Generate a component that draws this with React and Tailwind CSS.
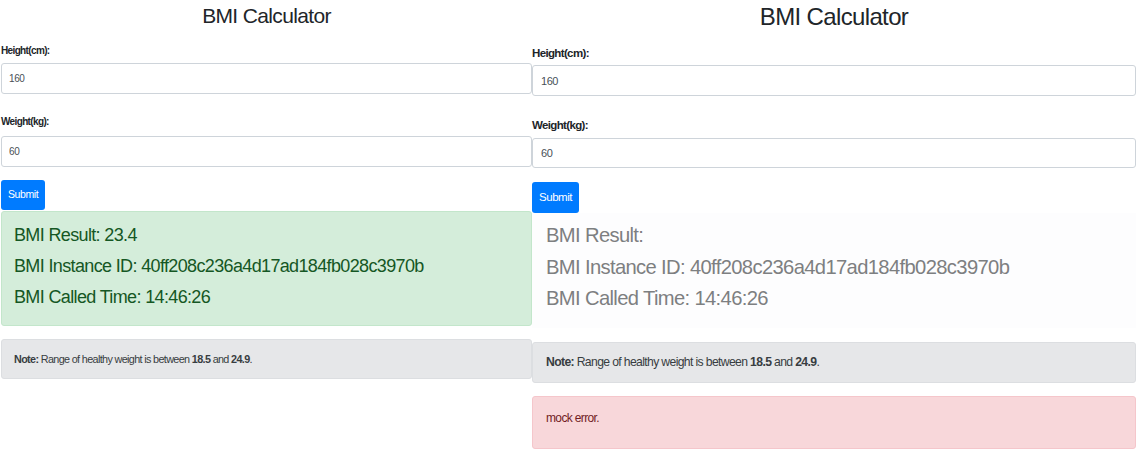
import React from 'react';

// two copies of the same calculator: left one got a result, right one a mock error
const FONT = "font-['Liberation_Sans',Arial,sans-serif] tracking-[-0.04em]";

const Field = ({ label, value, labelCls, inputCls }) => (
  <>
    <label className={`block font-bold text-[#212529] leading-[16px] ${labelCls}`}>{label}</label>
    <input
      readOnly
      value={value}
      className={`block w-full border border-[#ced4da] rounded-[3px] bg-white text-[#495057] tracking-[-0.04em] outline-none ${inputCls}`}
    />
  </>
);

const Note = ({ cls }) => (
  <div className={`border border-[#dcdee1] rounded-[3px] bg-[#e6e7e9] text-[#383d41] ${cls}`}>
    <b>Note:</b> Range of healthy weight is between <b>18.5</b> and <b>24.9</b>.
  </div>
);

const App = () => {
  return (
    <div className={`w-[1137px] h-[451px] bg-white flex overflow-hidden ${FONT}`}>
      {/* LEFT */}
      <div className="w-[531px] ml-[1px] shrink-0">
        <h2 className="text-center text-[21px] leading-[32px] text-[#212529]">BMI Calculator</h2>
        <div className="mt-[11px]">
          <Field label="Height(cm):" value="160" labelCls="text-[10px]" inputCls="mt-[4px] h-[31px] pl-[7px] text-[10px]" />
        </div>
        <div className="mt-[20px]">
          <Field label="Weight(kg):" value="60" labelCls="text-[10px]" inputCls="mt-[6px] h-[31px] pl-[7px] text-[10px]" />
        </div>
        <button className="mt-[13px] h-[30px] px-[7px] rounded-[3px] bg-[#007bff] text-white text-[10.5px] tracking-[-0.04em]">Submit</button>
        <div className="mt-[1px] h-[115px] border border-[#c3e6cb] rounded-[3px] bg-[#d4edda] text-[#155724] pl-[12px] pt-[8px] text-[18px] leading-[31px]">
          <p>BMI Result: 23.4</p>
          <p>BMI Instance ID: 40ff208c236a4d17ad184fb028c3970b</p>
          <p>BMI Called Time: 14:46:26</p>
        </div>
        <Note cls="mt-[13px] h-[40px] pl-[12px] text-[10.8px] leading-[38px]" />
      </div>

      {/* RIGHT */}
      <div className="w-[604px] shrink-0">
        <h2 className="text-center text-[24px] leading-[34px] text-[#212529]">BMI Calculator</h2>
        <div className="mt-[11px]">
          <Field label="Height(cm):" value="160" labelCls="text-[11.5px]" inputCls="mt-[4px] h-[31px] pl-[8px] text-[11px]" />
        </div>
        <div className="mt-[21px]">
          <Field label="Weight(kg):" value="60" labelCls="text-[11.5px]" inputCls="mt-[5px] h-[30px] pl-[8px] text-[11px]" />
        </div>
        <button className="mt-[14px] h-[31px] px-[7px] rounded-[3px] bg-[#007bff] text-white text-[11.5px] tracking-[-0.04em]">Submit</button>
        <div className="h-[115px] bg-[#fdfdfe] text-[#7d7f81] pl-[14px] pt-[7px] text-[20.2px] leading-[31.5px]">
          <p>BMI Result:</p>
          <p>BMI Instance ID: 40ff208c236a4d17ad184fb028c3970b</p>
          <p>BMI Called Time: 14:46:26</p>
        </div>
        <Note cls="mt-[14px] h-[41px] pl-[13px] text-[12.2px] leading-[39px]" />
        <div className="mt-[13px] h-[53px] border border-[#f5c6cb] rounded-[3px] bg-[#f8d7da] text-[#721c24] pl-[13px] pt-[11px] text-[12px] leading-[20px]">
          mock error.
        </div>
      </div>
    </div>
  );
};

export default App;
